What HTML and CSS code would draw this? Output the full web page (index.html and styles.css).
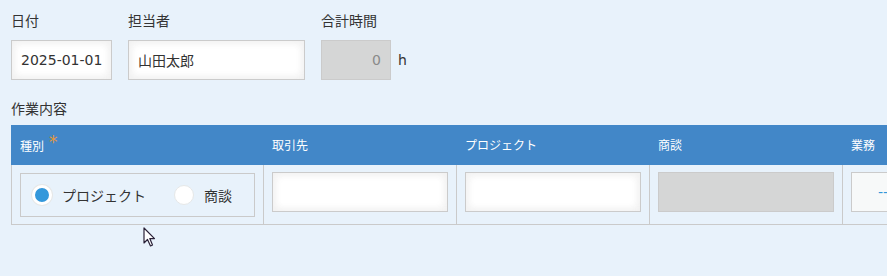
FILE: index.html
```html
<!DOCTYPE html>
<html>
<head>
    <title>作業日報</title>
    <link rel="stylesheet" href="styles.css">
</head>
<body>
    <div class="page">
        <!-- 上段の入力欄 -->
        <div class="fields">
            <div class="field">
                <label>日付</label>
                <input class="text date" type="text" value="2025-01-01">
            </div>
            <div class="field">
                <label>担当者</label>
                <input class="text user" type="text" value="山田太郎">
            </div>
            <div class="field">
                <label>合計時間</label>
                <div class="with-unit">
                    <input class="text total" type="text" value="0" disabled>
                    <span class="unit">h</span>
                </div>
            </div>
        </div>

        <!-- 作業内容テーブル -->
        <div class="section-label">作業内容</div>
        <div class="subtable">
            <div class="th">種別<span class="required">*</span></div>
            <div class="th">取引先</div>
            <div class="th">プロジェクト</div>
            <div class="th">商談</div>
            <div class="th">業務</div>

            <div class="td first">
                <div class="radio-group">
                    <label class="radio"><span class="dot checked"></span>プロジェクト</label>
                    <label class="radio"><span class="dot"></span>商談</label>
                </div>
            </div>
            <div class="td"><input class="text cell" type="text"></div>
            <div class="td"><input class="text cell" type="text"></div>
            <div class="td"><input class="text cell" type="text" disabled></div>
            <div class="td"><div class="select">-----</div></div>
        </div>
    </div>

    <svg class="cursor" width="14" height="21" viewBox="0 0 14 21">
        <path d="M1 1 L1 16 L4.5 12.5 L7.5 19 L9.5 18 L6.8 11.6 L11.5 11.6 Z" fill="#fff" stroke="#2a2238" stroke-width="1.2" stroke-linejoin="round"/>
    </svg>
</body>
</html>
```

FILE: styles.css
```css
/* 全体 */
body {
    margin: 0;
    background-color: #e8f2fb;
    color: #333;
    font-family: "DejaVu Sans", "Noto Sans CJK JP", sans-serif;
    font-size: 14px;
    overflow: hidden;
}

.page {
    padding: 10px 0 0 11px;
}

.fields {
    display: flex;
    gap: 16px;
}

.field label {
    display: block;
    line-height: 20px;
    margin-bottom: 10px;
    font-family: "Noto Sans CJK JP", sans-serif;
    font-size: 14px;
}

.text {
    box-sizing: border-box;
    height: 40px;
    margin: 0;
    padding: 0 9px;
    border: 1px solid #cbcbcb;
    background-color: #fff;
    box-shadow: 1px 1px 10px #f0f0f0 inset, -1px -1px 10px #f0f0f0 inset;
    color: #333;
    font-family: "DejaVu Sans", "Noto Sans CJK JP", sans-serif;
    font-size: 14px;
    outline: none;
}

.date {
    width: 101px;
}

.user {
    width: 177px;
}

.total {
    width: 70px;
    text-align: right;
}

.text:disabled {
    background-color: #d5d6d6;
    box-shadow: none;
    color: #8a8a8a;
}

.with-unit {
    display: flex;
    align-items: center;
}

.unit {
    margin-left: 7px;
}

.section-label {
    margin-top: 18px;
    margin-bottom: 7px;
    line-height: 20px;
    font-family: "Noto Sans CJK JP", sans-serif;
    font-size: 14px;
}

/* サブテーブル */
.subtable {
    display: grid;
    grid-template-columns: 252px 193px 193px 193px 193px;
    grid-template-rows: 40px 60px;
}

.th {
    box-sizing: border-box;
    padding-left: 9px;
    background-color: #4287c8;
    color: #fff;
    font-family: "Noto Sans CJK JP", sans-serif;
    font-size: 12px;
    line-height: 40px;
}

.required {
    position: relative;
    top: -3px;
    margin-left: 5px;
    color: #e5973a;
    font-family: "DejaVu Sans", sans-serif;
    font-size: 17px;
}

.td {
    box-sizing: border-box;
    padding: 7px 0 0 8px;
    border-left: 1px solid #cacaca;
    border-bottom: 1px solid #cacaca;
}

.td.first {
    padding-top: 8px;
}

.cell {
    width: 176px;
}

.radio-group {
    box-sizing: border-box;
    display: flex;
    align-items: center;
    gap: 28px;
    width: 235px;
    height: 44px;
    padding-left: 11px;
    border: 1px solid #cacaca;
    font-family: "Noto Sans CJK JP", sans-serif;
    font-size: 14px;
}

.radio {
    display: flex;
    align-items: center;
}

.dot {
    box-sizing: border-box;
    width: 20px;
    height: 20px;
    margin-right: 10px;
    border-radius: 50%;
    background-color: #fff;
    border: 1px solid #e6e8e8;
}

.dot.checked {
    border: 3px solid #fff;
    background-color: #3498db;
    box-shadow: 0 0 0 1px #e6e8e8;
}

.select {
    box-sizing: border-box;
    width: 176px;
    height: 40px;
    padding-left: 26px;
    border: 1px solid #cbcbcb;
    background-color: #f7f9f9;
    color: #3498db;
    line-height: 38px;
}

/* マウスカーソル */
.cursor {
    position: absolute;
    left: 143px;
    top: 227px;
}
```
